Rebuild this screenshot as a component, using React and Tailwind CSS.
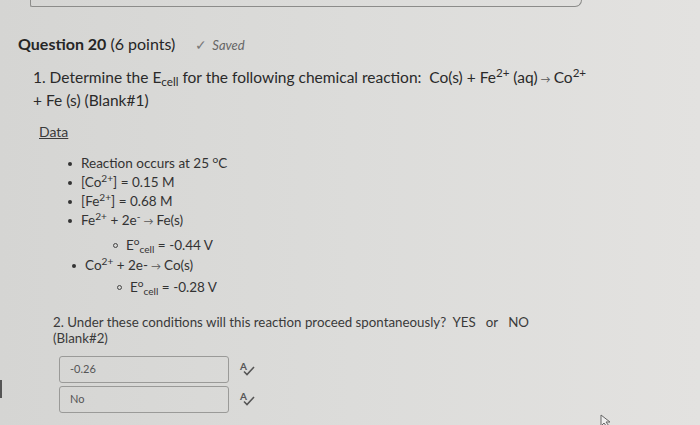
import React from 'react';

const SpellIcon = () => (
  <span className="relative inline-block w-[14px] h-[14px]">
    <span className="absolute left-0 top-[-3px] text-[10px] font-bold text-[#555]">A</span>
    <svg className="absolute left-[3px] top-[4px]" width="12" height="10" viewBox="0 0 12 10">
      <path d="M1 5.5 L4 8.5 L11 1" fill="none" stroke="#555" strokeWidth="1.6" />
    </svg>
  </span>
);

const Sup = ({ children }) => <sup className="text-[75%]">{children}</sup>;
const Sub = ({ children }) => <sub className="text-[75%]">{children}</sub>;
const Arrow = () => <span className="text-[10px] text-[#555] mx-[3px]">→</span>;

const Bullet = ({ sub, children, shift = '' }) => (
  <li className={`flex items-center ${shift}`}>
    {sub ? (
      <span className="w-[5px] h-[5px] rounded-full border border-[#444] mr-[8px]" />
    ) : (
      <span className="w-[4px] h-[4px] rounded-full bg-[#333] mr-[9px]" />
    )}
    <span>{children}</span>
  </li>
);

const AnswerBox = ({ value }) => (
  <div className="flex items-center">
    <div className="w-[170px] h-[27px] border border-[#9a9a98] rounded-[3px] flex items-center pl-[10px] text-[11px] text-[#555]">
      {value}
    </div>
    <div className="ml-[11px]">
      <SpellIcon />
    </div>
  </div>
);

export default function App() {
  return (
    <div
      className="relative w-[700px] h-[425px] overflow-hidden bg-gradient-to-r from-[#d5d5d3] via-[#dcdcda] to-[#e3e2e0] text-[#2e2e2e]"
      style={{ fontFamily: 'Lato, "Noto Sans", sans-serif' }}
    >
      {/* top container edge */}
      <div className="ml-[30px] w-[552px] h-[7px] border border-t-0 border-[#8c8c8a] rounded-bl-[3px] rounded-br-[10px]" />

      {/* header */}
      <div className="pl-[18px] mt-[25px] flex items-baseline">
        <span className="text-[16px] font-bold text-[#262626]">Question 20</span>
        <span className="text-[16px] ml-[4px] text-[#262626]">(6 points)</span>
        <span className="ml-[20px] text-[13px] italic text-[#666] flex items-baseline">
          <span className="mr-[5px] not-italic text-[14px] text-[#777]">✓</span>Saved
        </span>
      </div>

      {/* question 1 */}
      <div className="pl-[33px] mt-[11px] text-[15.5px] leading-[21px] text-[#2a2a2a]">
        <p>
          1. Determine the E<Sub>cell</Sub> for the following chemical reaction:&nbsp; Co(s) + Fe<Sup>2+</Sup> (aq)<Arrow />Co<Sup>2+</Sup>
          <br />+ Fe (s) (Blank#1)
        </p>
        <p className="mt-[10px] ml-[6px] text-[14px] underline text-[#3a3a3a]">Data</p>
      </div>

      <ul className="pl-[68px] mt-[12px] text-[13.5px] leading-[19px] text-[#333]">
        <Bullet>Reaction occurs at 25 <Sup>o</Sup>C</Bullet>
        <Bullet>[Co<Sup>2+</Sup>] = 0.15 M</Bullet>
        <Bullet>[Fe<Sup>2+</Sup>] = 0.68 M</Bullet>
        <Bullet>Fe<Sup>2+</Sup> + 2e<Sup>-</Sup><Arrow />Fe(s)</Bullet>
        <li className="pl-[45px] pt-[5px]">
          <ul>
            <Bullet sub>E<Sup>o</Sup><Sub>cell</Sub> = -0.44 V</Bullet>
          </ul>
        </li>
        <Bullet shift="ml-[4px] mt-[1px]">Co<Sup>2+</Sup> + 2e-<Arrow />Co(s)</Bullet>
        <li className="pl-[49px] pt-[2px]">
          <ul>
            <Bullet sub>E<Sup>o</Sup><Sub>cell</Sub> = -0.28 V</Bullet>
          </ul>
        </li>
      </ul>

      {/* question 2 */}
      <div className="pl-[53px] mt-[17px] text-[13.3px] leading-[16px] text-[#3a3a3a]">
        <p>
          2. Under these conditions will this reaction proceed spontaneously?&nbsp; YES&nbsp;&nbsp; or&nbsp;&nbsp; NO
          <br />(Blank#2)
        </p>
      </div>

      <div className="pl-[59px] mt-[10px] flex flex-col gap-[3px]">
        <AnswerBox value="-0.26" />
        <AnswerBox value="No" />
      </div>

      {/* left edge mark */}
      <div className="absolute left-0 top-[380px] w-[2px] h-[18px] bg-[#555]" />

      {/* mouse cursor */}
      <svg className="absolute left-[600px] top-[414px]" width="12" height="14" viewBox="0 0 12 14">
        <path d="M1 1 L1 12 L4 9 L7 13 L9 12 L6 8 L10 8 Z" fill="#eee" stroke="#666" strokeWidth="1" />
      </svg>
    </div>
  );
}
